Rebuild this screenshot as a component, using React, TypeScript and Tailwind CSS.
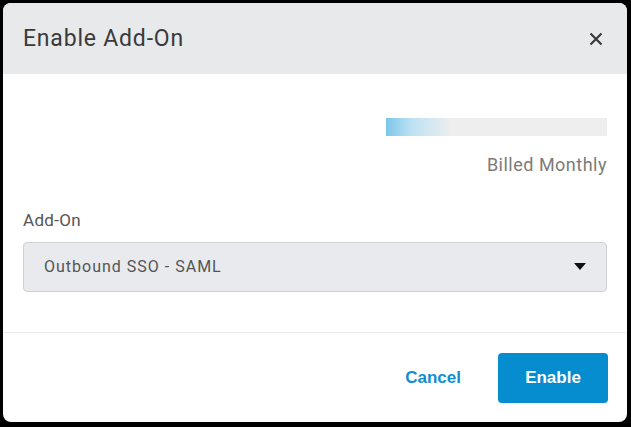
import React from "react";

export default function App() {
  return (
    <div className="w-[631px] h-[427px] bg-black pt-[3px] pl-[3px]">
      <div className="w-[624px] h-[419px] bg-white rounded-[8px] overflow-hidden flex flex-col">
        <div className="h-[71px] bg-[#e8e9eb] flex items-center justify-between pl-[20px] pr-[24px] shrink-0">
          <span className="text-[23px] text-[#3a3a3a] font-['Roboto',sans-serif] tracking-[0.8px] mt-[1px]">Enable Add-On</span>
          <svg width="14" height="14" viewBox="0 0 14 14" className="mt-[1px]">
            <path d="M1.5 1.5 L12.5 12.5 M12.5 1.5 L1.5 12.5" stroke="#3a3a3a" strokeWidth="2.2" strokeLinecap="butt" />
          </svg>
        </div>
        <div className="flex-1 flex flex-col px-[20px] font-['Roboto',sans-serif]">
          <div className="flex justify-end mt-[44px]">
            <div className="w-[221px] h-[18px] bg-[linear-gradient(90deg,#7cc6ea_0%,#bfe2f3_12%,#eeeeee_30%,#eeeeee_100%)] blur-[0.6px]" />
          </div>
          <div className="flex justify-end mt-[18px] text-[18px] text-[#7b7b7b] leading-[22px] tracking-[0.5px]">Billed Monthly</div>
          <div className="mt-[34px] text-[17px] text-[#555] leading-[20px] tracking-[0.3px]">Add-On</div>
          <div className="mt-[12px] h-[50px] bg-[#e8eaed] border border-[#cfd1d4] rounded-[4px] flex items-center justify-between pl-[20px] pr-[20px]">
            <span className="text-[16px] text-[#555] tracking-[1px]">Outbound SSO - SAML</span>
            <svg width="12" height="8" viewBox="0 0 12 8">
              <path d="M0 0 L12 0 L6 7 Z" fill="#111" />
            </svg>
          </div>
        </div>
        <div className="h-px bg-[#ececec] mb-[20px]" />
        <div className="flex justify-end items-center gap-[37px] pr-[19px] pb-[19px] font-['Liberation_Sans',Arial,sans-serif] font-bold text-[17px]">
          <span className="text-[#138dd0]">Cancel</span>
          <button className="w-[110px] h-[50px] bg-[#068dcf] text-white rounded-[4px] font-bold">Enable</button>
        </div>
      </div>
    </div>
  );
}
